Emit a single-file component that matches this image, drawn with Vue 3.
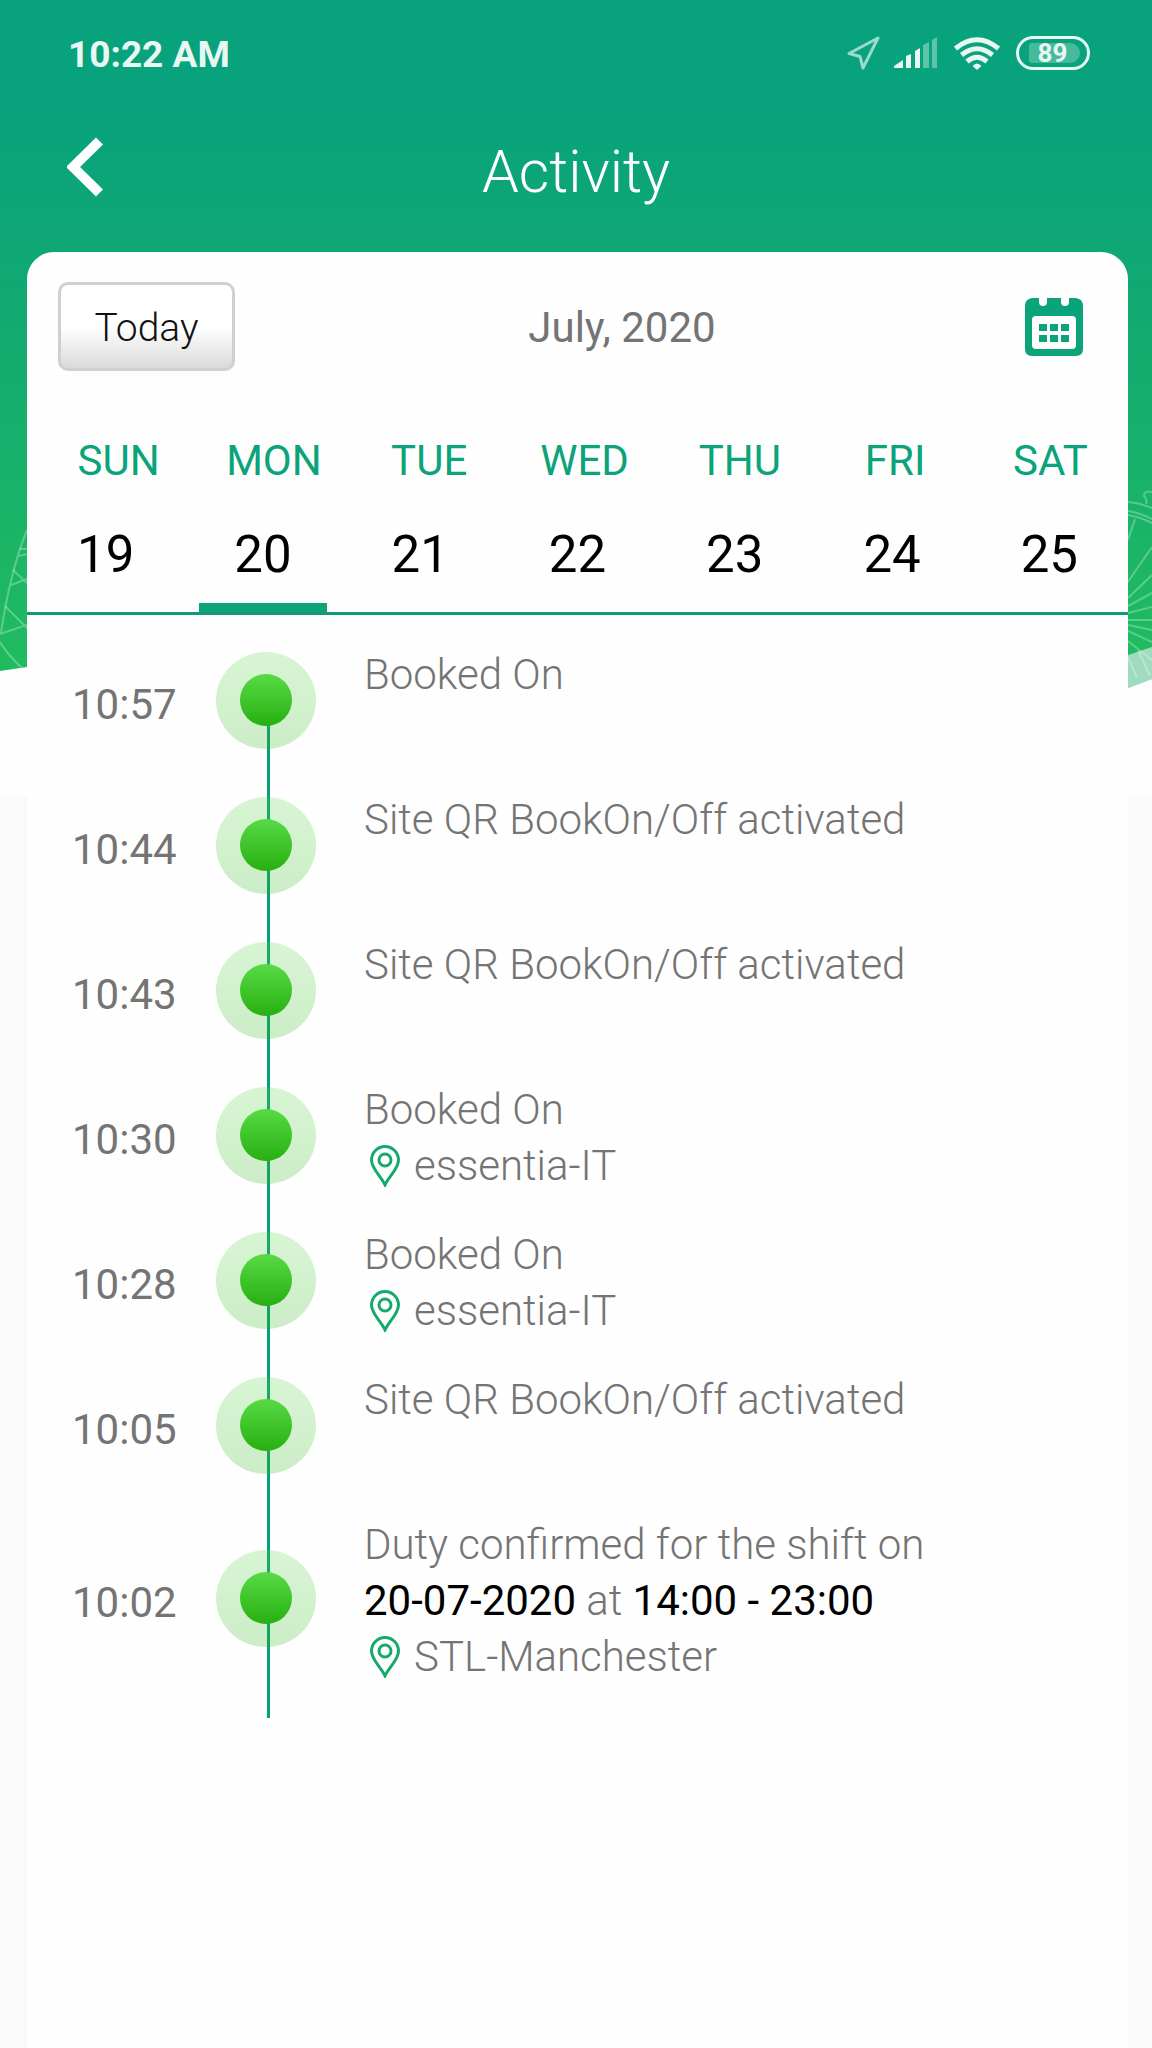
<script setup>
const weekDays = ['SUN', 'MON', 'TUE', 'WED', 'THU', 'FRI', 'SAT']
const dates = [19, 20, 21, 22, 23, 24, 25]
const selected = 20

const entries = [
  { time: '10:57', text: 'Booked On' },
  { time: '10:44', text: 'Site QR BookOn/Off activated' },
  { time: '10:43', text: 'Site QR BookOn/Off activated' },
  { time: '10:30', text: 'Booked On', place: 'essentia-IT' },
  { time: '10:28', text: 'Booked On', place: 'essentia-IT' },
  { time: '10:05', text: 'Site QR BookOn/Off activated' },
  {
    time: '10:02',
    text: 'Duty confirmed for the shift on',
    date: '20-07-2020',
    hours: '14:00 - 23:00',
    place: 'STL-Manchester',
  },
]
</script>

<template>
  <div class="screen">
    <div class="backdrop" aria-hidden="true">
      <svg class="art" width="27" height="796" viewBox="0 0 27 796">
        <path d="M0 671L27 667V796H0Z" fill="#fefefe" />
        <g fill="none" stroke="#fff" stroke-opacity=".28" stroke-width="2">
          <path d="M27 530Q10 572 1 633" />
          <path d="M20 549H27M19 556L27 554M13 570L27 583M11 585L27 579M5 606L27 628M0 634L27 625M0 642Q8 655 22 668" />
        </g>
      </svg>
      <svg class="art" width="24" height="796" viewBox="0 0 24 796">
        <path d="M0 655L24 647V679L0 688Z" fill="#9fdbbf" />
        <path d="M0 688L24 679V796H0Z" fill="#fefefe" />
        <g fill="none" stroke="#fff" stroke-opacity=".28" stroke-width="2">
          <path d="M0 502Q12 503 24 508M0 511Q12 513 24 519M0 515Q12 517 24 523" />
          <path d="M24 492Q16 490 16 496Q20 500 18 504" />
          <path d="M7 519L0 540M24 547Q10 567 0 582M24 575L0 598M24 593L0 606M24 607L0 613M0 620H24M0 625L24 630M0 631L24 642M0 641L24 660M0 657L9 678M10 650L22 676" />
        </g>
      </svg>
    </div>

    <div class="status">
      <span class="clock">10:22 AM</span>
      <div class="indicators">
        <svg width="33" height="34" viewBox="0 0 33 34" fill="none" stroke="#fff" stroke-opacity=".6" stroke-width="3" stroke-linejoin="round">
          <path d="M31 2L2 17.500L13 20.500L16 32Z" />
        </svg>
        <svg class="signal" width="44" height="32" viewBox="0 0 44 32" fill="#e9f7f3">
          <path d="M0 31V29L9 23V31ZM12 31V19L17 17V31ZM21 31V14L26 11V31Z" />
          <path d="M29 31V8L35 5V31ZM38 31V3L43 0V31Z" fill-opacity=".38" />
        </svg>
        <svg width="46" height="33" viewBox="0 0 46 33" fill="none" stroke="#e9f7f3" stroke-width="5">
          <path d="M1.500 11.500Q23-6 44.500 11.500M7.500 18Q23 5.500 38.500 18M13 24.500Q23 16 33 24.500" />
          <path d="M18.500 29Q23 24 27.500 29L23 33Z" fill="#e9f7f3" stroke="none" />
        </svg>
        <span class="battery"><span class="level">89</span></span>
      </div>
    </div>

    <header class="header">
      <button class="back" type="button" aria-label="Back">
        <svg width="36" height="60" viewBox="0 0 36 60" fill="none" stroke="#fff" stroke-width="10">
          <path d="M32.500 4L6 30L32.500 56" />
        </svg>
      </button>
      <h1 class="title">Activity</h1>
    </header>

    <main class="card">
      <div class="toolbar">
        <button class="today" type="button">Today</button>
        <h2 class="month">July, 2020</h2>
        <button class="pick" type="button" aria-label="Open calendar">
          <svg width="58" height="58" viewBox="0 0 58 58">
            <path
              fill="#0aa37a"
              fill-rule="evenodd"
              d="M7 0H14V4A4 4 0 0 0 22 4V0H36V4A4 4 0 0 0 44 4V0H51Q58 1 58 8V51Q58 58 51 58H7Q0 58 0 51V8Q0 1 7 0ZM11 18Q7 18 7 22V47Q7 51 11 51H47Q51 51 51 47V22Q51 18 47 18Z"
            />
            <path fill="#0aa37a" d="M14 26H22V33H14ZM25 26H33V33H25ZM36 26H44V33H36ZM14 37H22V44H14ZM25 37H33V44H25ZM36 37H44V44H36Z" />
          </svg>
        </button>
      </div>

      <div class="names">
        <span v-for="day in weekDays" :key="day">{{ day }}</span>
      </div>
      <div class="dates">
        <button
          v-for="date in dates"
          :key="date"
          type="button"
          class="date"
          :class="{ selected: date === selected }"
          :aria-pressed="date === selected"
        >{{ date }}</button>
      </div>

      <ol class="timeline">
        <li v-for="entry in entries" :key="entry.time" class="entry">
          <time class="time">{{ entry.time }}</time>
          <span class="rail"><span class="node"></span></span>
          <div class="body">
            <p>{{ entry.text }}</p>
            <p v-if="entry.date"><b>{{ entry.date }}</b> at <b>{{ entry.hours }}</b></p>
            <p v-if="entry.place" class="place">
              <svg width="30" height="42" viewBox="0 0 30 42" fill="none" stroke="#14aa6c" stroke-width="3">
                <path d="M15 40C11 31 1.500 24 1.500 15A13.500 13.500 0 0 1 28.500 15C28.500 24 19 31 15 40Z" />
                <circle cx="15" cy="15" r="6" />
              </svg>
              {{ entry.place }}
            </p>
          </div>
        </li>
      </ol>
    </main>
  </div>
</template>

<style>
body {
  margin: 0;
  background: #fafafa;
}
</style>

<style scoped>
.screen {
  position: relative;
  display: flex;
  flex-direction: column;
  min-height: 100vh;
  font-family: Roboto, "Liberation Sans", sans-serif;
  color: #747474;
}
button {
  padding: 0;
  border: 0;
  background: none;
  font: inherit;
  color: inherit;
}
h1, h2, p, ol {
  margin: 0;
  padding: 0;
}
svg {
  display: block;
  flex: none;
}
.backdrop {
  position: absolute;
  inset: 0 0 auto;
  display: flex;
  justify-content: space-between;
  height: 796px;
  background: linear-gradient(#08a37c 0, #08a37c 110px, #0fa774 250px, #17b06b 450px, #21bc5f 680px);
}
.status,
.header,
.card {
  position: relative;
}
.status {
  display: flex;
  align-items: center;
  justify-content: space-between;
  height: 106px;
  padding: 0 62px 0 68px;
  color: #e9f7f3;
}
.clock {
  padding-top: 2px;
  font-size: 37px;
  font-weight: 700;
}
.indicators {
  display: flex;
  align-items: center;
  gap: 16px;
}
.signal {
  margin-left: -2px;
}
.battery {
  box-sizing: border-box;
  width: 74px;
  height: 34px;
  padding: 4px;
  border: 3px solid #e9f7f3;
  border-radius: 17px;
}
.level {
  display: block;
  margin: 0 3px 0 6px;
  padding-right: 4px;
  border-radius: 3px 10px 10px 3px;
  background: rgba(255, 255, 255, .25);
  font-size: 26px;
  font-weight: 700;
  line-height: 20px;
  text-align: center;
}
.header {
  display: flex;
  align-items: center;
  justify-content: center;
  height: 146px;
}
.back {
  position: absolute;
  left: 67px;
  top: 31px;
}
.title {
  padding-bottom: 14px;
  font-size: 59px;
  font-weight: 300;
  line-height: 72px;
  color: #fff;
}
.card {
  flex: 1;
  margin: 0 24px 0 27px;
  border-radius: 27px 27px 0 0;
  background: #fefefe;
}
.toolbar {
  display: flex;
  align-items: center;
  padding: 30px 45px 0 31px;
}
.today {
  width: 177px;
  height: 89px;
  padding-top: 2px;
  border: 3px solid #d0d0d0;
  border-radius: 10px;
  background: linear-gradient(#fff 50%, #dadada);
  color: #111;
  font-size: 39px;
  font-weight: 300;
}
.month {
  flex: 1;
  padding: 2px 16px 0 0;
  font-size: 42px;
  font-weight: 400;
  text-align: center;
}
.names,
.dates {
  display: grid;
  grid-template-columns: repeat(7, 1fr);
}
.names {
  margin-top: 60px;
  padding-left: 14px;
  font-size: 42px;
  line-height: 60px;
  text-align: center;
  color: #0aa37a;
}
.dates {
  margin-top: 24px;
  border-bottom: 3px solid #11997a;
}
.date {
  position: relative;
  height: 97px;
  padding-bottom: 18px;
  font-size: 51px;
  line-height: 79px;
  color: #000;
}
.selected::after {
  content: "";
  position: absolute;
  inset: auto 15px 0;
  height: 9px;
  background: #0aa37a;
}
.timeline {
  padding-top: 32px;
  list-style: none;
}
.entry {
  display: grid;
  grid-template-columns: 189px 100px 1fr;
}
.time,
.rail {
  display: flex;
  align-items: center;
  padding-bottom: 33px;
}
.time {
  padding: 2px 0 33px 45px;
  font-size: 42px;
}
.rail {
  position: relative;
}
.rail::before {
  content: "";
  position: absolute;
  inset: 0 46px 0 51px;
  background: #06a078;
}
.entry:first-child .rail::before {
  top: 56px;
}
.node {
  position: relative;
  display: grid;
  place-items: center;
  width: 100px;
  height: 97px;
  margin-bottom: 6px;
  border-radius: 50%;
  background: linear-gradient(rgba(82, 214, 60, .22), rgba(44, 180, 24, .24));
}
.node::after {
  content: "";
  width: 52px;
  height: 52px;
  border-radius: 50%;
  background: linear-gradient(#58da45, #27b011);
}
.body {
  min-height: 112px;
  padding: 0 20px 33px 48px;
  font-size: 42px;
  font-weight: 300;
  line-height: 56px;
}
.body b {
  font-weight: 400;
  color: #000;
}
.place {
  display: flex;
  align-items: center;
  gap: 14px;
  padding-left: 6px;
}
</style>
